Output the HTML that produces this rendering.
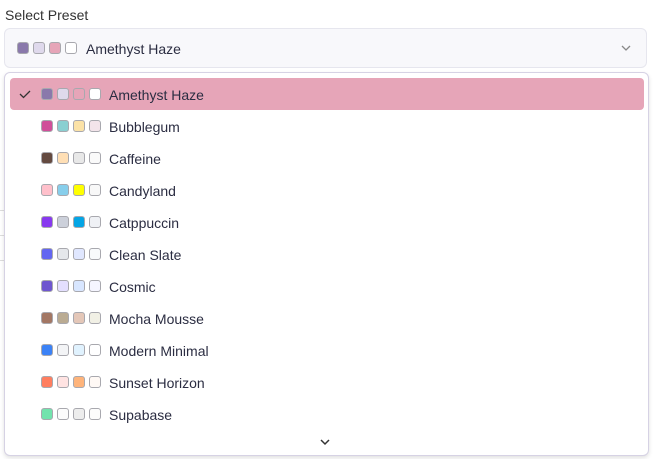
<!DOCTYPE html>
<html><head><style>
*{box-sizing:border-box;margin:0;padding:0}
body{width:653px;height:459px;background:#fff;font-family:"Liberation Sans",sans-serif;color:#2b2d42;position:relative;overflow:hidden;font-size:14px}
.lbl{position:absolute;left:5px;top:7px;font-size:14px;color:#333}
.trig{position:absolute;left:4px;top:28px;width:643px;height:40px;border:1px solid #e6e6ee;border-radius:6px;background:#f8f8fb}
.s{display:flex;gap:4px}
.sw{display:block;width:12px;height:12px;border:1px solid #a8a8ae;border-radius:3px}
.trig .s{position:absolute;left:12px;top:13px}
.trig .t{position:absolute;left:81px;top:12px}
.bgl{position:absolute;left:0;height:1px;width:6px;background:#ddd}
.dd{position:absolute;left:4px;top:72px;width:645px;height:384px;border:1px solid #d6d2e4;border-radius:6px;background:#fff;box-shadow:0 2px 4px rgba(0,0,0,.12)}
.row{position:absolute;left:5px;width:634px;height:32px}
.row.sel{background:#e6a5b8;border-radius:4px}
.row .s{position:absolute;left:31px;top:10px}
.row .t{position:absolute;left:99px;top:9px}
.chk{position:absolute;left:8px;top:9px}
.chev{position:absolute}
</style></head><body>
<div class="lbl">Select Preset</div>
<div class="trig"><div class="s"><span class="sw" style="background:#8a79ab"></span><span class="sw" style="background:#dfd9ec"></span><span class="sw" style="background:#e6a5b8"></span><span class="sw" style="background:#fff"></span></div><div class="t">Amethyst Haze</div>
<svg class="chev" style="left:615px;top:14px" width="12" height="10" viewBox="0 0 12 10"><path d="M2 3l4 4 4-4" fill="none" stroke="#888" stroke-width="1.3"/></svg></div>
<div class="bgl" style="top:210px"></div><div class="bgl" style="top:235px"></div><div class="bgl" style="top:260px"></div>
<div class="dd">
<div class="row sel" style="top:5px"><svg class="chk" width="14" height="14" viewBox="0 0 14 14"><path d="M2 7l3.5 3.5L12 4" fill="none" stroke="#333" stroke-width="1.3"/></svg><div class="s"><span class="sw" style="background:#8a79ab"></span><span class="sw" style="background:#dfd9ec"></span><span class="sw" style="background:#e6a5b8"></span><span class="sw" style="background:#fff"></span></div><div class="t">Amethyst Haze</div></div>
<div class="row" style="top:37px"><div class="s"><span class="sw" style="background:#d04f99"></span><span class="sw" style="background:#8acfd1"></span><span class="sw" style="background:#fbe2a7"></span><span class="sw" style="background:#f3e4ea"></span></div><div class="t">Bubblegum</div></div>
<div class="row" style="top:69px"><div class="s"><span class="sw" style="background:#644a40"></span><span class="sw" style="background:#ffdfb5"></span><span class="sw" style="background:#e8e8e8"></span><span class="sw" style="background:#fafafa"></span></div><div class="t">Caffeine</div></div>
<div class="row" style="top:101px"><div class="s"><span class="sw" style="background:#ffc0cb"></span><span class="sw" style="background:#87ceeb"></span><span class="sw" style="background:#ffff00"></span><span class="sw" style="background:#f8f8f8"></span></div><div class="t">Candyland</div></div>
<div class="row" style="top:133px"><div class="s"><span class="sw" style="background:#8839ef"></span><span class="sw" style="background:#ccd0da"></span><span class="sw" style="background:#04a5e5"></span><span class="sw" style="background:#eff1f5"></span></div><div class="t">Catppuccin</div></div>
<div class="row" style="top:165px"><div class="s"><span class="sw" style="background:#6366f1"></span><span class="sw" style="background:#e5e7eb"></span><span class="sw" style="background:#e0e7ff"></span><span class="sw" style="background:#f8fafc"></span></div><div class="t">Clean Slate</div></div>
<div class="row" style="top:197px"><div class="s"><span class="sw" style="background:#6e56cf"></span><span class="sw" style="background:#e4dfff"></span><span class="sw" style="background:#d8e6ff"></span><span class="sw" style="background:#f5f5ff"></span></div><div class="t">Cosmic</div></div>
<div class="row" style="top:229px"><div class="s"><span class="sw" style="background:#a37764"></span><span class="sw" style="background:#baab92"></span><span class="sw" style="background:#e4c7b8"></span><span class="sw" style="background:#f1f0e5"></span></div><div class="t">Mocha Mousse</div></div>
<div class="row" style="top:261px"><div class="s"><span class="sw" style="background:#3b82f6"></span><span class="sw" style="background:#f3f4f6"></span><span class="sw" style="background:#e0f2fe"></span><span class="sw" style="background:#fff"></span></div><div class="t">Modern Minimal</div></div>
<div class="row" style="top:293px"><div class="s"><span class="sw" style="background:#ff7e5f"></span><span class="sw" style="background:#ffe3e2"></span><span class="sw" style="background:#feb47b"></span><span class="sw" style="background:#fff9f5"></span></div><div class="t">Sunset Horizon</div></div>
<div class="row" style="top:325px"><div class="s"><span class="sw" style="background:#72e3ad"></span><span class="sw" style="background:#fcfcfc"></span><span class="sw" style="background:#ededed"></span><span class="sw" style="background:#fcfcfc"></span></div><div class="t">Supabase</div></div>
<svg class="chev" style="left:314px;top:364px" width="12" height="10" viewBox="0 0 12 10"><path d="M2 3l4 4 4-4" fill="none" stroke="#333" stroke-width="1.5"/></svg>
</div>
</body></html>
